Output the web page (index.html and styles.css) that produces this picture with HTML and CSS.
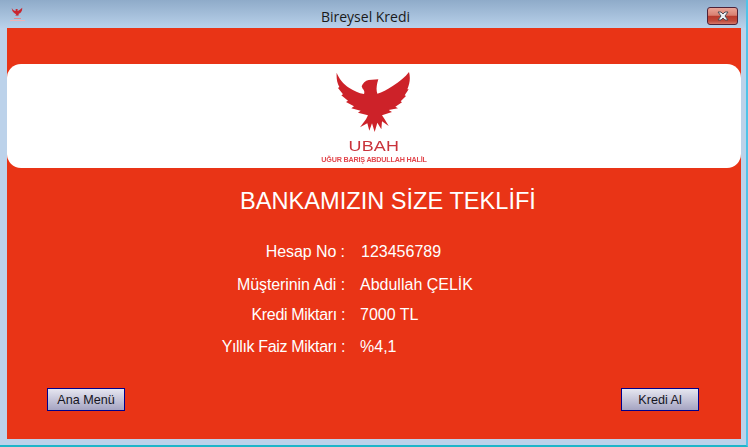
FILE: index.html
```html
<!DOCTYPE html>
<html lang="tr">
<head>
<meta charset="utf-8">
<title>Bireysel Kredi</title>
<link rel="stylesheet" href="styles.css">
</head>
<body>
<svg class="defs" width="0" height="0" aria-hidden="true">
  <defs>
    <symbol id="eagle" viewBox="0 0 246 210">
      <path d="M14 20C20 36 34 54 52 66C66 75 80 82 96 84C98 78 97 73 92 68L89 61C92 52 100 44 110 42L139 40L136 50C134 60 132 70 136 83C150 80 166 70 182 60C202 47 220 34 231 18C236 36 233 54 226 70L230 70L218 88L222 90L206 106L210 109L190 122L198 127L170 132L180 138L150 148L158 160L170 180L150 166L148 190L136 170L128 198L120 172L112 194L106 172L84 184L102 160L108 148L78 140L86 134L58 127L66 121L42 108L48 104L28 88L33 85L18 66L22 63C15 50 13 36 14 20Z"/>
    </symbol>
  </defs>
</svg>
<div class="window">
  <header class="titlebar">
    <div class="app-icon">
      <svg class="app-eagle"><use href="#eagle"/></svg>
      <span class="app-line"></span>
      <span class="app-line app-line-wide"></span>
    </div>
    <h1 class="title">Bireysel Kredi</h1>
    <button class="close" type="button" aria-label="Kapat">
      <svg viewBox="0 0 14 10" width="14" height="10">
        <path class="close-x" d="M2 1H5L7 3L9 1H12L9 5L12 9H9L7 7L5 9H2L5 5Z"/>
      </svg>
    </button>
  </header>
  <main class="content">
    <section class="banner">
      <svg class="eagle"><use href="#eagle"/></svg>
      <div class="brand">UBAH</div>
      <div class="brand-sub">UĞUR BARIŞ ABDULLAH HALİL</div>
    </section>
    <h2 class="heading">BANKAMIZIN SİZE TEKLİFİ</h2>
    <dl class="details">
      <div class="row"><dt>Hesap No :</dt><dd>123456789</dd></div>
      <div class="row row-b"><dt>Müşterinin Adi :</dt><dd class="nudge">Abdullah ÇELİK</dd></div>
      <div class="row row-c"><dt class="tight">Kredi Miktarı :</dt><dd class="nudge">7000 TL</dd></div>
      <div class="row row-d"><dt class="tight">Yıllık Faiz Miktarı :</dt><dd class="nudge">%4,1</dd></div>
    </dl>
    <div class="actions">
      <button class="btn" type="button">Ana Menü</button>
      <button class="btn" type="button">Kredi Al</button>
    </div>
  </main>
</div>
</body>
</html>
```
FILE: styles.css
```css
* { box-sizing: border-box; }
html, body { margin: 0; padding: 0; }
body {
  width: 748px;
  height: 447px;
  overflow: hidden;
  font-family: "Liberation Sans", Arial, sans-serif;
}
.defs { position: absolute; }
.window {
  width: 748px;
  height: 447px;
  display: flex;
  flex-direction: column;
  background: #bcd2ea;
  border-right: 2px solid #4fc3e8;
  border-bottom: 2px solid #1fb5c9;
  padding: 0 5px 6px 7px;
}
.titlebar {
  height: 28px;
  flex: none;
  margin: 0 -5px 0 -7px;
  padding: 7px 8px 0 9px;
  display: grid;
  grid-template-columns: 1fr auto 1fr;
  align-items: start;
  background: linear-gradient(#8fabc9, #b9d1ea);
}
.app-icon {
  width: 16px;
  display: flex;
  flex-direction: column;
  align-items: center;
  gap: 1px;
}
.app-eagle { width: 12px; height: 10px; fill: #c9252f; }
.app-line { width: 7px; height: 1px; background: #e08a90; }
.app-line-wide { width: 15px; background: #eeb3b6; }
.title {
  margin: 1px 0 0;
  font-family: "Open Sans", sans-serif;
  font-size: 14px;
  font-weight: 400;
  line-height: 18px;
  color: #1a1a1a;
  position: relative;
  left: -8px;
}
.close {
  justify-self: end;
  width: 31px;
  height: 18px;
  padding: 0;
  display: flex;
  align-items: center;
  justify-content: center;
  border: 1px solid #4d2238;
  border-radius: 3px;
  background: linear-gradient(#e9a598 0%, #d87f70 46%, #b93a2c 50%, #c0493a 80%, #d47768 100%);
}
.close-x { fill: #eef0f4; stroke: #4c4c55; stroke-width: 1; }
.content {
  flex: 1;
  display: flex;
  flex-direction: column;
  background: #e93416;
  padding-top: 36px;
}
.banner {
  height: 104px;
  background: #fff;
  border-radius: 14px;
  display: flex;
  flex-direction: column;
  align-items: center;
  flex: none;
  padding: 2px 0 0 0;
}
.eagle {
  width: 82px;
  height: 70px;
  fill: #cd2229;
  flex: none;
  margin-right: 2px;
  filter: blur(0.4px);
}
.brand {
  margin-top: 3px;
  font-size: 14px;
  line-height: 14px;
  letter-spacing: 0.2px;
  color: #c9333b;
  transform: scaleX(1.28);
  filter: blur(0.25px);
}
.brand-sub {
  margin-top: 2px;
  font-size: 7.2px;
  line-height: 9px;
  font-weight: 700;
  letter-spacing: -0.2px;
  color: #e2474d;
  filter: blur(0.2px);
}
.heading {
  margin: 19px 0 0;
  text-align: center;
  font-size: 23.6px;
  font-weight: 400;
  line-height: 28px;
  color: #fff;
  padding-left: 28px;
}
.details { margin: 27px 0 0; }
.row {
  display: grid;
  grid-template-columns: 338px 1fr;
  column-gap: 16px;
  font-size: 16px;
  line-height: 19px;
  color: #fff;
}
.row-b { margin-top: 14px; }
.row-c { margin-top: 11px; }
.row-d { margin-top: 13px; }
dt { text-align: right; letter-spacing: -0.08px; }
dd { margin: 0; }
dt.tight { letter-spacing: -0.35px; }
.nudge { margin-left: -1px; }
.actions {
  display: flex;
  justify-content: space-between;
  padding: 0 42px 0 40px;
  margin-top: 32px;
}
.btn {
  width: 78px;
  height: 23px;
  padding: 0;
  border: 1px solid #00008b;
  background: linear-gradient(#e6e6f0, #a5a4c2);
  font-family: "Liberation Sans", Arial, sans-serif;
  font-size: 12.6px;
  color: #14141e;
}
```
